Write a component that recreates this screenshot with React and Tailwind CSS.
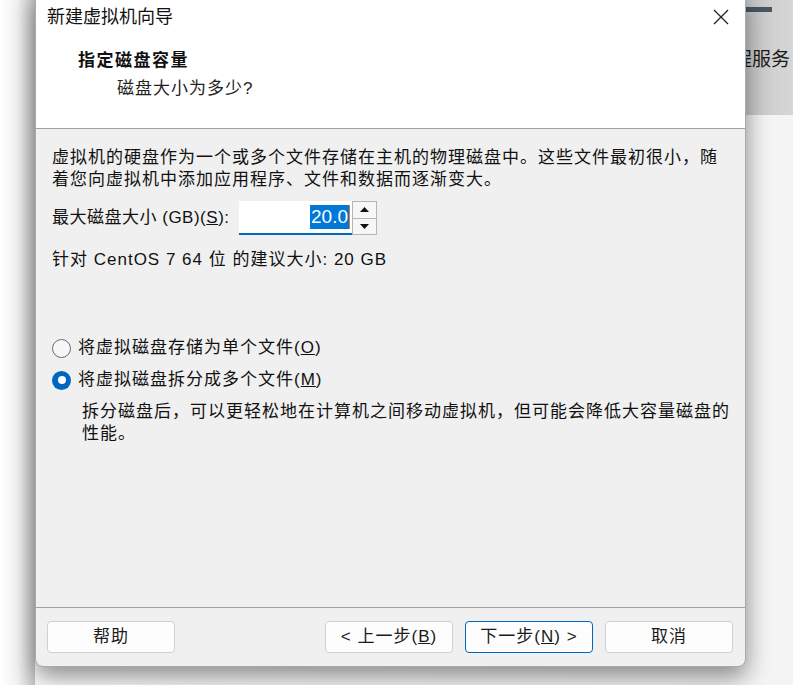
import React from 'react';

const font = { fontFamily: '"Liberation Sans", "Noto Sans CJK SC", sans-serif' };

const Btn = ({ children, primary }) => (
  <button
    className={`flex h-[32px] w-[128px] items-center justify-center rounded-[4px] border bg-[#fdfdfd] text-[17px] tracking-[1px] text-[#1a1a1a] ${
      primary ? 'border-[#0067c0]' : 'border-[#d0d0d0]'
    }`}
  >
    {children}
  </button>
);

const Radio = ({ checked, children }) => (
  <label className="flex items-center gap-[7px]">
    {checked ? (
      <span className="flex h-[19px] w-[19px] items-center justify-center rounded-full bg-[#0067c0]">
        <span className="h-[8px] w-[8px] rounded-full bg-white" />
      </span>
    ) : (
      <span className="h-[19px] w-[19px] rounded-full border border-[#6b6b6b] bg-[#f7f7f7]" />
    )}
    <span>{children}</span>
  </label>
);

export default function App() {
  return (
    <div className="relative h-[685px] w-[793px] overflow-hidden bg-gradient-to-r from-white to-[#f4f4f4]" style={font}>
      {/* window behind, right top */}
      <div className="absolute right-0 top-0 h-[115px] w-[93px] bg-gradient-to-r from-[#bdbdbd] to-[#d6d6d6]">
        <div className="ml-[46px] mt-[7px] h-[5px] w-[26px] bg-[#4a5864]" />
        <div className="mt-[38px] pl-[33px] whitespace-nowrap text-[19px] leading-none text-[#1a1a1a]">程服务</div>
      </div>
      {/* left desktop shadow */}
      <div className="absolute left-0 top-0 h-full w-[35px] bg-gradient-to-r from-white via-[#f2f2f2] to-[#c8c8c8]" />

      <div className="absolute left-[35px] top-[-10px] flex h-[677px] w-[711px] flex-col overflow-hidden rounded-b-[8px] border border-[#a9a9a9] bg-[#f0f0f0] shadow-[0_10px_24px_rgba(0,0,0,0.45)]">
        {/* header */}
        <div className="h-[138px] shrink-0 border-b border-[#a0a0a0] bg-white">
          <div className="flex h-[38px] items-center justify-between pl-[11px] pr-[16px] pt-[14px]">
            <span className="text-[18px] leading-[24px] text-[#111]">新建虚拟机向导</span>
            <svg width="16" height="16" viewBox="0 0 16 16">
              <path d="M1 1L15 15M15 1L1 15" stroke="#222" strokeWidth="1.3" fill="none" />
            </svg>
          </div>
          <div className="pl-[42px] pt-[22px] text-[17px] font-bold leading-[20px] tracking-[1.5px] text-[#111]">指定磁盘容量</div>
          <div className="pl-[81px] pt-[8px] text-[17px] leading-[20px] tracking-[1px] text-[#222]">磁盘大小为多少?</div>
        </div>

        {/* body */}
        <div className="flex flex-1 flex-col pl-[16px] pr-[14px] pt-[18px] text-[17px] leading-[22px] tracking-[1px] text-[#111]">
          <p className="pr-[4px]">虚拟机的硬盘作为一个或多个文件存储在主机的物理磁盘中。这些文件最初很小，随着您向虚拟机中添加应用程序、文件和数据而逐渐变大。</p>

          <div className="mt-[10px] flex items-center">
            <span className="w-[187px] tracking-[0.5px]">
              最大磁盘大小 (GB)(<span className="underline">S</span>):
            </span>
            <div className="flex h-[34px] w-[113px] items-center justify-end border-b-2 border-[#0067c0] bg-white pr-[2px] tracking-normal">
              <span className="bg-[#0078d7] px-[1px] text-[19px] leading-[24px] text-white">20.0</span>
              <span className="h-[24px] w-[1px] bg-[#e07020]" />
            </div>
            <div className="flex h-[34px] w-[25px] flex-col border border-[#b5b5b5] bg-[#f0f0f0]">
              <div className="flex flex-1 items-center justify-center border-b border-[#b5b5b5] bg-[#f7f7f7]">
                <svg width="9" height="5" viewBox="0 0 9 5"><path d="M4.5 0L9 5H0Z" fill="#111" /></svg>
              </div>
              <div className="flex flex-1 items-center justify-center bg-[#f7f7f7]">
                <svg width="9" height="5" viewBox="0 0 9 5"><path d="M0 0H9L4.5 5Z" fill="#111" /></svg>
              </div>
            </div>
          </div>

          <p className="mt-[14px]">针对 CentOS 7 64 位 的建议大小: 20 GB</p>

          <div className="mt-[66px] flex flex-col gap-[10px]">
            <Radio>
              将虚拟磁盘存储为单个文件(<span className="underline">O</span>)
            </Radio>
            <Radio checked>
              将虚拟磁盘拆分成多个文件(<span className="underline">M</span>)
            </Radio>
          </div>
          <p className="mt-[10px] pl-[30px]">拆分磁盘后，可以更轻松地在计算机之间移动虚拟机，但可能会降低大容量磁盘的性能。</p>
        </div>

        {/* footer */}
        <div className="flex h-[59px] shrink-0 items-start justify-between border-t border-[#a0a0a0] pl-[11px] pr-[12px] pt-[13px]">
          <Btn>帮助</Btn>
          <div className="flex gap-[12px]">
            <Btn>
              &lt; 上一步(<span className="underline">B</span>)
            </Btn>
            <Btn primary>
              下一步(<span className="underline">N</span>) &gt;
            </Btn>
            <Btn>取消</Btn>
          </div>
        </div>
      </div>
    </div>
  );
}
